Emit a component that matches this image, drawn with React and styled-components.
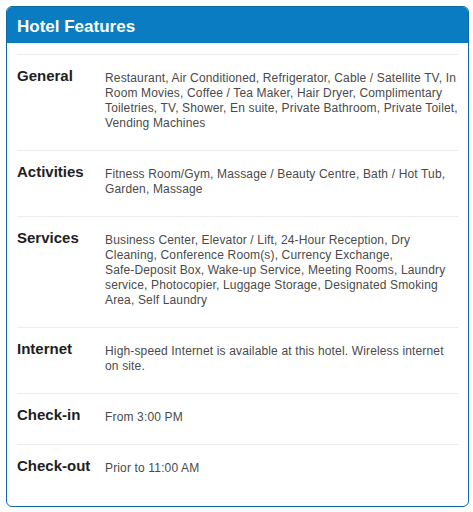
import React from "react";
import styled, { createGlobalStyle } from "styled-components";

const Global = createGlobalStyle`
  html, body { margin: 0; padding: 0; background: #fff; }
  body { font-family: "Liberation Sans", Arial, sans-serif; }
`;

const Card = styled.section`
  box-sizing: border-box;
  width: 463px;
  margin: 6px;
  border: 1px solid #0c6aa6;
  border-radius: 6px;
  overflow: hidden;
  background: #fff;
`;

const Header = styled.h2`
  margin: 0;
  padding: 10px 10px 6px;
  background: #0a7dc2;
  color: #fff;
  font-size: 17px;
  line-height: 20px;
  font-weight: bold;
`;

const Body = styled.div`
  padding: 11px 10px 11px;
`;

const Row = styled.div`
  display: grid;
  grid-template-columns: 88px 1fr;
  border-top: 1px solid #ececec;
  padding: 12px 0 19px;
`;

const Label = styled.div`
  font-size: 15px;
  line-height: 18px;
  font-weight: bold;
  color: #1e1e1e;
`;

const Value = styled.div`
  padding-top: 4px;
  font-size: 12px;
  line-height: 15px;
  letter-spacing: 0.15px;
  color: #4a4a4a;
`;

const NoBreak = styled.span`
  white-space: nowrap;
`;

const rows = [
  ["General", "Restaurant, Air Conditioned, Refrigerator, Cable / Satellite TV, In Room Movies, Coffee / Tea Maker, Hair Dryer, Complimentary Toiletries, TV, Shower, En suite, Private Bathroom, Private Toilet, Vending Machines"],
  ["Activities", "Fitness Room/Gym, Massage / Beauty Centre, Bath / Hot Tub, Garden, Massage"],
  ["Services", "Business Center, Elevator / Lift, 24-Hour Reception, Dry Cleaning, Conference Room(s), Currency Exchange, Safe-Deposit Box, Wake-up Service, Meeting Rooms, Laundry service, Photocopier, Luggage Storage, Designated Smoking Area, Self Laundry"],
  ["Internet", "High-speed Internet is available at this hotel. Wireless internet on site."],
  ["Check-in", "From 3:00 PM"],
  ["Check-out", "Prior to 11:00 AM"],
];

function renderValue(text) {
  return text.split(" ").map((word, i) => {
    const sep = i > 0 ? " " : "";
    if (word.includes("-")) {
      return (
        <React.Fragment key={i}>
          {sep}
          <NoBreak>{word}</NoBreak>
        </React.Fragment>
      );
    }
    return sep + word;
  });
}

export default function App() {
  return (
    <>
      <Global />
      <Card>
        <Header>Hotel Features</Header>
        <Body>
          {rows.map(([label, value]) => (
            <Row key={label}>
              <Label>{label}</Label>
              <Value>{renderValue(value)}</Value>
            </Row>
          ))}
        </Body>
      </Card>
    </>
  );
}
